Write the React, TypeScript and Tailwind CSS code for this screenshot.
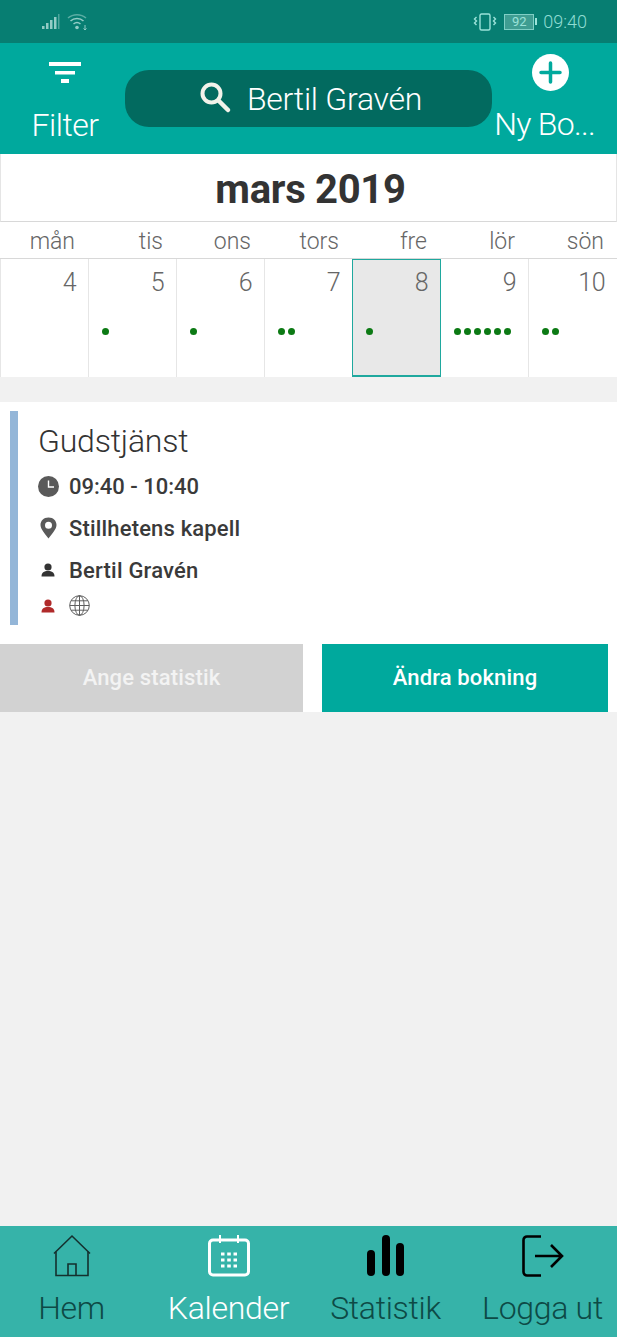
import React from 'react';

const days = [
  { label: 'mån', num: 4, dots: 0 },
  { label: 'tis', num: 5, dots: 1 },
  { label: 'ons', num: 6, dots: 1 },
  { label: 'tors', num: 7, dots: 2 },
  { label: 'fre', num: 8, dots: 1, selected: true },
  { label: 'lör', num: 9, dots: 6 },
  { label: 'sön', num: 10, dots: 2 }
];

const PersonIcon = ({ color }: { color: string }) => (
  <svg width="14" height="14" viewBox="0 0 14 14" fill={color}>
    <ellipse cx="7" cy="4" rx="3.6" ry="3.6" />
    <path d="M0.5 13.5 C0.5 9.5 3 8 7 8 C11 8 13.5 9.5 13.5 13.5 Z" />
  </svg>
);

const InfoRow = ({ icon, text, className }: { icon: React.ReactNode; text: string; className?: string }) => (
  <div className="flex h-[42px] items-center">
    <div className="flex w-[31px] justify-start">{icon}</div>
    <span className={`text-[22px] font-medium text-[#3a3a3a] ${className ?? ''}`}>{text}</span>
  </div>
);

const NavItem = ({
  icon,
  label,
  className
}: {
  icon: React.ReactNode;
  label: string;
  className: string;
}) => (
  <div className="flex flex-col items-center">
    <div className="flex h-[44px] items-center">{icon}</div>
    <span className={`mt-[8px] text-[32px] leading-[44px] font-light tracking-[-0.3px] whitespace-nowrap ${className}`}>
      {label}
    </span>
  </div>
);

export default function App() {
  return (
    <div className="flex h-[1337px] w-[617px] flex-col overflow-hidden bg-[#f1f1f1] font-['Roboto',sans-serif]">
      {/* status bar */}
      <div className="flex h-[43px] items-center justify-between bg-[#077e72] pr-[30px] pl-[42px]">
        <div className="flex items-center gap-[7px] opacity-70">
          <svg width="18" height="16" viewBox="0 0 18 16" fill="#cfeeea">
            <rect x="0" y="12" width="2.5" height="3" />
            <rect x="4" y="9" width="2.5" height="6" />
            <rect x="8" y="6" width="2.5" height="9" />
            <rect x="12" y="3" width="2.5" height="12" />
            <rect x="16" y="0" width="1.5" height="15" opacity="0.5" />
          </svg>
          <svg width="21" height="18" viewBox="0 0 21 18" fill="none" stroke="#cfeeea" strokeWidth="1.5">
            <path d="M1 5 C6 0.5 14 0.5 19 5" opacity="0.6" />
            <path d="M3.5 8 C7 4.5 13 4.5 16.5 8" />
            <path d="M6.5 11 C8.5 9.3 11.5 9.3 13.5 11" />
            <circle cx="10" cy="14.5" r="1.8" fill="#cfeeea" stroke="none" />
            <path d="M18 12 V17 M16.5 15.5 L18 17 L19.5 15.5" strokeWidth="1" />
          </svg>
        </div>
        <div className="flex items-center text-[#8fdcd2]">
          <svg width="24" height="18" viewBox="0 0 24 18" fill="none" stroke="#9be2d9" strokeWidth="1.4">
            <rect x="7" y="1" width="10" height="16" rx="1.5" />
            <path d="M3.5 4 L1.5 6 L3.5 8 L1.5 10 L3.5 12" />
            <path d="M20.5 4 L22.5 6 L20.5 8 L22.5 10 L20.5 12" />
          </svg>
          <div className="ml-[7px] flex h-[16px] w-[30px] items-center justify-center border border-[#7fcfc5] bg-[#3f9d92] text-[13px] text-[#9be2d9]">
            92
          </div>
          <div className="ml-px h-[7px] w-[2px] bg-[#9be2d9]" />
          <span className="ml-[6px] text-[18px] font-light">09:40</span>
        </div>
      </div>

      {/* header */}
      <div className="flex h-[111px] items-start bg-[#00a99d]">
        <div className="flex w-[125px] shrink-0 flex-col items-center pt-[16px] pl-[5px]">
          <svg width="32" height="28" viewBox="0 0 32 28" fill="#fff">
            <rect x="0" y="3" width="32" height="4" />
            <rect x="6" y="12" width="20" height="3.5" />
            <rect x="12" y="20" width="8" height="4" />
          </svg>
          <span className="mt-[19px] text-[32px] leading-[38px] font-light tracking-[-0.5px] text-white">Filter</span>
        </div>
        <div className="mt-[27px] flex h-[57px] w-[367px] shrink-0 items-center justify-center gap-[15px] rounded-[24px] bg-[#026a5f] pl-[3px]">
          <svg width="34" height="34" viewBox="0 0 34 34" fill="none" stroke="#f2f2ea" className="-mt-[3px]">
            <circle cx="13.5" cy="13.5" r="9" strokeWidth="4" />
            <path d="M20.5 20.5 L30 30" strokeWidth="4.5" strokeLinecap="round" />
          </svg>
          <span className="text-[32px] leading-none font-light tracking-[-0.25px] text-white">Bertil Gravén</span>
        </div>
        <div className="flex min-w-0 flex-1 flex-col items-center pt-[11px] pr-[9px]">
          <svg width="37" height="37" viewBox="0 0 37 37">
            <circle cx="18.5" cy="18.5" r="18.5" fill="#fff" />
            <path d="M18.5 9 V28 M9 18.5 H28" stroke="#00a99d" strokeWidth="3.5" strokeLinecap="round" />
          </svg>
          <span className="mt-[14px] mr-[11px] text-[32px] leading-[38px] font-light tracking-[-0.7px] whitespace-nowrap text-white">
            Ny Bo...
          </span>
        </div>
      </div>

      {/* calendar */}
      <div className="bg-white">
        <div className="flex h-[68px] items-center justify-center border-x border-x-[#e5e5e5] border-b border-b-[#d8d8d8] pt-[5px] pl-[4px]">
          <span className="text-[40px] font-bold tracking-[-0.3px] text-[#333]">mars 2019</span>
        </div>
        <div className="grid h-[37px] grid-cols-[repeat(6,88px)_89px] border-b border-[#d8d8d8]">
          {days.map((d) => (
            <div key={d.label} className="pt-[5px] pr-[13px] text-right text-[23px] leading-[30px] font-light text-[#666]">
              {d.label}
            </div>
          ))}
        </div>
        <div className="grid h-[118px] grid-cols-[repeat(6,88px)_89px]">
          {days.map((d) => (
            <div
              key={d.num}
              className={
                d.selected
                  ? 'relative z-10 -mr-px border border-b-2 border-[#1fa89e] bg-[#e8e8e8] pt-[6px]'
                  : 'border-l border-[#e6e6e6] pt-[7px]'
              }
            >
              <div className="pr-[12px] text-right text-[25px] leading-[34px] font-light tracking-[-0.5px] text-[#666]">
                {d.num}
              </div>
              <div className="mt-[28px] flex gap-[3px] pl-[13px]">
                {Array.from({ length: d.dots }).map((_, i) => (
                  <div key={i} className="h-[7px] w-[7px] rounded-full bg-[#0c7a14]" />
                ))}
              </div>
            </div>
          ))}
        </div>
      </div>

      {/* booking */}
      <div className="mt-[25px] h-[310px] bg-white pt-[9px]">
        <div className="ml-[10px] flex h-[214px] flex-col border-l-[8px] border-[#94b6d8] pt-[7px] pl-[20px]">
          <div className="mb-[1px] text-[32px] leading-[46px] font-light tracking-[-0.2px] text-[#333]">Gudstjänst</div>
          <InfoRow
            icon={
              <svg width="21" height="21" viewBox="0 0 21 21">
                <circle cx="10.5" cy="10.5" r="10.5" fill="#5a5a5a" />
                <path d="M10.5 4.5 V11 H16" stroke="#fff" strokeWidth="1.4" fill="none" />
              </svg>
            }
            text="09:40 - 10:40"
          />
          <InfoRow
            className="tracking-[0.17px]"
            icon={
              <svg width="21" height="22" viewBox="0 0 21 22">
                <path
                  fillRule="evenodd"
                  fill="#5a5a5a"
                  d="M10.5 0.5 C5.5 0.5 2.5 4 2.5 8 C2.5 12 7 17 10.5 21.5 C14 17 18.5 12 18.5 8 C18.5 4 15.5 0.5 10.5 0.5 Z M10.5 4.7 A3.5 3.5 0 1 1 10.5 11.7 A3.5 3.5 0 1 1 10.5 4.7 Z"
                />
              </svg>
            }
            text="Stillhetens kapell"
          />
          <InfoRow
            className="tracking-[0.2px]"
            icon={
              <div className="pl-[3px]">
                <PersonIcon color="#333" />
              </div>
            }
            text="Bertil Gravén"
          />
          <div className="mt-[4px] flex items-center">
            <div className="w-[31px] pl-[3px]">
              <PersonIcon color="#b02a2a" />
            </div>
            <svg width="21" height="21" viewBox="0 0 21 21" fill="none" stroke="#5f5f5f" strokeWidth="1">
              <circle cx="10.5" cy="10.5" r="9.8" />
              <ellipse cx="10.5" cy="10.5" rx="4.6" ry="9.8" />
              <path d="M10.5 0.7 V20.3 M0.7 10.5 H20.3 M2 5.8 H19 M2 15.2 H19" />
            </svg>
          </div>
        </div>
        <div className="mt-[19px] flex h-[68px] items-stretch pr-[9px]">
          <div className="flex w-[303px] items-center justify-center bg-[#d2d2d2] pb-[2px] text-[22px] font-medium tracking-[0.15px] text-[#f3f3f3]">
            Ange statistik
          </div>
          <div className="ml-[19px] flex flex-1 items-center justify-center bg-[#00a99d] pb-[2px] text-[22px] font-medium tracking-[0.15px] text-white">
            Ändra bokning
          </div>
        </div>
      </div>

      <div className="flex-1" />

      {/* bottom nav */}
      <div className="flex h-[111px] items-start bg-[#36b3a9] pt-[8px]">
        <div className="ml-[-7px] grid shrink-0 grid-cols-[repeat(4,157px)]">
          <NavItem
            className="text-[#0d4a46]"
            label="Hem"
            icon={
              <svg width="38" height="44" viewBox="0 0 38 44" fill="none" stroke="#14302e" strokeWidth="1.6">
                <path d="M1 19.5 L19 2 L37 19.5" />
                <path d="M3 17.5 V41.5 H35 V17.5" />
                <path d="M15 41 V30 H23 V41" />
              </svg>
            }
          />
          <NavItem
            className="text-white"
            label="Kalender"
            icon={
              <svg width="42" height="44" viewBox="0 0 42 44" fill="none" stroke="#fff" strokeWidth="3">
                <rect x="1.5" y="6" width="39" height="35" rx="3.5" />
                <path d="M12 1 V9 M30 1 V9" strokeWidth="2" />
                <path
                  d="M13 20 H16.5 M19.2 20 H22.8 M25.5 20 H29 M13 26 H16.5 M19.2 26 H22.8 M25.5 26 H29 M13 32 H16.5 M19.2 32 H22.8 M25.5 32 H29"
                  strokeWidth="3"
                />
              </svg>
            }
          />
          <NavItem
            className="text-[#0d4a46]"
            label="Statistik"
            icon={
              <svg width="38" height="42" viewBox="0 0 38 42" fill="#000">
                <rect x="0" y="15" width="8" height="26" rx="4" />
                <rect x="15" y="0" width="8" height="41" rx="4" />
                <rect x="29" y="8" width="8" height="33" rx="4" />
              </svg>
            }
          />
          <NavItem
            className="text-[#0d4a46]"
            label="Logga ut"
            icon={
              <svg width="42" height="42" viewBox="0 0 42 42" fill="none" stroke="#000" strokeWidth="2.6">
                <path d="M19 1.5 H5 A3.5 3.5 0 0 0 1.5 5 V37 A3.5 3.5 0 0 0 5 40.5 H19" />
                <path d="M13 21 H40 M29 10 L40 21 L29 32" />
              </svg>
            }
          />
        </div>
      </div>
    </div>
  );
}
